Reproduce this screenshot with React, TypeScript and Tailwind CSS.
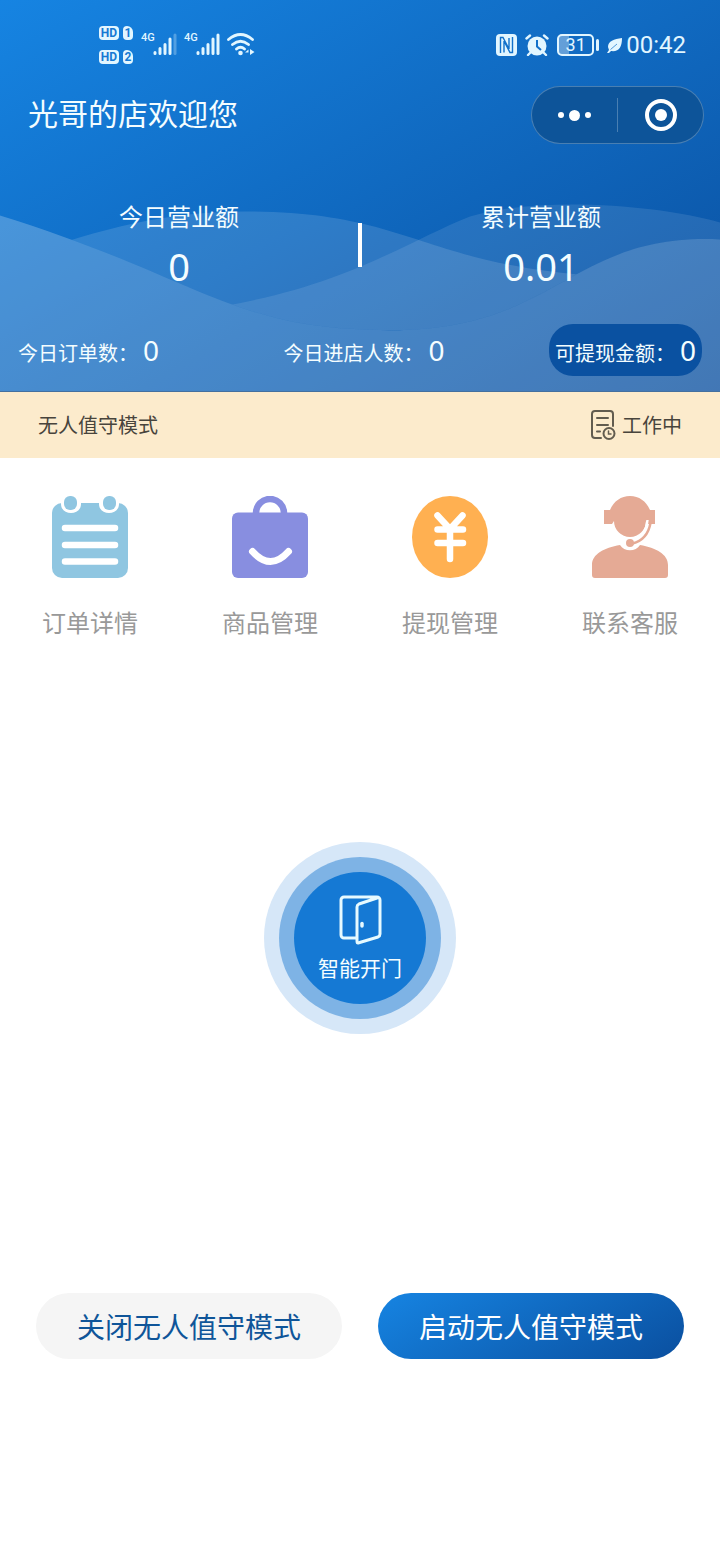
import { useState } from 'react';
import type { ReactNode } from 'react';

const menuItems = [
    { label: '订单详情', icon: <OrdersIcon /> },
    { label: '商品管理', icon: <GoodsIcon /> },
    { label: '提现管理', icon: <YuanIcon /> },
    { label: '联系客服', icon: <ServiceIcon /> },
];

function OrdersIcon() {
    return (
        <svg width="76" height="82" viewBox="0 0 76 82" aria-hidden="true">
            <rect y="7" width="76" height="75" rx="10" fill="#8fc6e1" />
            <path d="M9 0h20v8C29 20 9 20 9 8zM47 0h20v8c0 12-20 12-20 0z" fill="#fff" />
            <g fill="#8fc6e1">
                <rect x="12" y="0" width="13" height="14" rx="6" />
                <rect x="51" y="0" width="13" height="14" rx="6" />
            </g>
            <path d="M13 32h50M13 49h50M13 65.5h50" stroke="#fff" strokeWidth="6.5" strokeLinecap="round" />
        </svg>
    );
}

function GoodsIcon() {
    return (
        <svg width="76" height="82" viewBox="0 0 76 82" fill="none" aria-hidden="true">
            <path d="M24 19v-2a14 14 0 0 1 28 0v2" stroke="#888ee0" strokeWidth="6.5" />
            <rect y="16.5" width="76" height="65.5" rx="6" fill="#888ee0" />
            <path d="M20.5 55.5q18 20 36 0" stroke="#fff" strokeWidth="7" strokeLinecap="round" />
        </svg>
    );
}

function YuanIcon() {
    return (
        <svg width="76" height="82" viewBox="0 0 76 82" fill="none" aria-hidden="true">
            <ellipse cx="38" cy="41" rx="38" ry="41" fill="#ffb051" />
            <path d="M25.5 19.5 38 33l12.5-13.5M25.5 33.5H51M25.5 47H51M38 34v29" stroke="#fff" strokeWidth="6.5" strokeLinecap="round" strokeLinejoin="round" />
        </svg>
    );
}

function ServiceIcon() {
    return (
        <svg width="76" height="82" viewBox="0 0 76 82" fill="none" aria-hidden="true">
            <path d="M18 14C22 5 29 0 38 0s16 5 20 14h5v14h-8l-1-3a16 16 0 0 1-32 0l-2 3h-8V14z" fill="#e5aa95" />
            <path d="M55.5 24c-1 11-6 17-13 20" stroke="#fff" strokeWidth="2.4" />
            <path d="M58.5 27c-2 11-8 18-18 20.5" stroke="#e5aa95" strokeWidth="2.5" />
            <circle cx="38" cy="47" r="4" fill="#e5aa95" />
            <path d="M28 49c4 7 16 7 20 0 16 3 28 9 28 20v10q0 3-3 3H3q-3 0-3-3V69c0-11 12-17 28-20z" fill="#e5aa95" />
        </svg>
    );
}

function Signal({ weak = false }: { weak?: boolean }) {
    return (
        <div className="flex">
            <span className="w-3 font-[Roboto] text-[11px] leading-[10px] font-medium">4G</span>
            <svg width="24" height="23" viewBox="0 0 24 23" aria-hidden="true">
                <g stroke="currentColor" strokeWidth="3" strokeLinecap="round">
                    <path d="M2 20.5v-1M7 20.5v-5M12 20.5v-9M17 20.5V6" />
                    <path d="M22 20.5V2" opacity={weak ? 0.3 : 1} />
                </g>
            </svg>
        </div>
    );
}

function HdBadge({ slot }: { slot: number }) {
    return (
        <div className="flex gap-1 font-[Roboto] text-xs leading-[14px] font-bold text-[#1579d3]">
            <span className="w-5 rounded-sm bg-[#e2f6ff] text-center">HD</span>
            <span className="w-[10px] rounded-sm rounded-tr-md bg-[#e2f6ff] text-center">{slot}</span>
        </div>
    );
}

function StatusBar() {
    return (
        <div className="flex h-[86px] items-center justify-between pt-1 pr-[34px] pl-[99px] text-[#e2f6ff]">
            <div className="flex items-center gap-2">
                <div className="flex flex-col gap-[10px]">
                    <HdBadge slot={1} />
                    <HdBadge slot={2} />
                </div>
                <div className="flex gap-[7px]">
                    <Signal weak />
                    <Signal />
                    <svg width="28" height="24" viewBox="0 0 28 24" fill="none" stroke="currentColor" strokeWidth="2.8" strokeLinecap="round" aria-hidden="true">
                        <path d="M1.5 6.5q12-10 24 0M5.5 11.5q8-6.5 16 0M9.5 16q4-3.5 8 0" />
                        <circle cx="13.5" cy="20" r="2.3" fill="currentColor" stroke="none" />
                        <path d="m21.5 16.5-3.5 3h3.5zM23 16v6l4.5-3z" fill="currentColor" stroke="none" />
                    </svg>
                </div>
            </div>
            <div className="flex items-center gap-2">
                <svg width="21" height="22" viewBox="0 0 21 22" aria-hidden="true">
                    <rect width="21" height="22" rx="4" fill="currentColor" />
                    <path d="M4.5 19V3.5h2.5L13 15V4M16.5 3v15.500H14L8 7v11.500" stroke="#1271ca" strokeWidth="1.4" fill="none" />
                </svg>
                <svg width="24" height="22" viewBox="0 0 24 22" aria-hidden="true">
                    <circle cx="12" cy="12" r="9.5" fill="currentColor" />
                    <path d="M1.5 4.5 5 1.5M22.5 4.5 19 1.5M5.5 18.5 3 21M18.5 18.5 21 21" stroke="currentColor" strokeWidth="2.4" strokeLinecap="round" />
                    <path d="M12 6v6.5l4 3.5" stroke="#1271ca" strokeWidth="2" fill="none" />
                </svg>
                <div className="flex items-center gap-[2px]">
                    <span className="h-[22px] w-[37px] rounded-[5px] border-2 border-current bg-linear-to-r from-white/35 from-30% to-transparent to-30% text-center font-[Roboto] text-lg leading-[18px]">31</span>
                    <span className="h-3 w-[3px] rounded-sm bg-current" />
                </div>
                <svg width="15" height="15" viewBox="0 0 15 15" aria-hidden="true">
                    <path d="M15 0C7 1 1 3 1 9l1 3-2 3h2l2-2c8 1 11-4 11-13z" fill="currentColor" />
                    <path d="M3.5 11.5 10 6" stroke="#1271ca" strokeWidth="0.7" />
                </svg>
                <time className="-ml-1 font-[Roboto] text-2xl leading-6">00:42</time>
            </div>
        </div>
    );
}

function Waves() {
    return (
        <svg className="absolute inset-0 h-full w-full" viewBox="0 0 720 392" preserveAspectRatio="none" fill="#fff" aria-hidden="true">
            <clipPath id="above-front">
                <path d="M0 0H720V240C570 233 560 331 390 331 230 331 205 280 0 216z" />
            </clipPath>
            <g clipPath="url(#above-front)">
                <path d="M0 265C90 232 160 212 245 212 410 212 420 265 600 277V392H0z" fillOpacity="0.13" />
                <path d="M190 312C340 292 400 245 470 217 540 196 660 206 720 223V392H190z" fillOpacity="0.1" />
            </g>
            <path d="M0 216C205 280 230 331 390 331 560 331 570 233 720 240V392H0z" fillOpacity="0.23" />
        </svg>
    );
}

function Total({ label, value }: { label: string; value: string }) {
    return (
        <div className="flex flex-1 flex-col items-center gap-[10px]">
            <span className="text-2xl leading-8">{label}</span>
            <span className="font-['Noto_Sans',sans-serif] text-[38px] leading-[48px]">{value}</span>
        </div>
    );
}

function Count({ label, value }: { label: string; value: number }) {
    return (
        <div className="flex items-baseline gap-[5px]">
            <span className="text-xl">{label}：</span>
            <span className="font-['Noto_Sans',sans-serif] text-[28px] leading-9">{value}</span>
        </div>
    );
}

function ModeButton({ primary = false, onClick, children }: { primary?: boolean; onClick: () => void; children: ReactNode }) {
    const colors = primary
        ? 'bg-linear-[150deg,#1684e2,#0a4f9f] text-white'
        : 'bg-[#f5f5f5] text-[#0f5599]';
    return (
        <button type="button" onClick={onClick} className={`h-[66px] flex-1 rounded-full text-[28px] ${colors}`}>
            {children}
        </button>
    );
}

export default function App() {
    const [working, setWorking] = useState(true);

    return (
        <div className="min-h-screen bg-white font-['Noto_Sans_CJK_SC',sans-serif]">
            <header className="relative border-b border-[#44709f] bg-linear-[150deg,#1684e2,#0a4f9f] pb-[15px] text-[#f4fdff]">
                <Waves />
                <div className="relative">
                    <StatusBar />
                    <div className="flex items-start justify-between pr-4 pl-7">
                        <h1 className="text-3xl leading-[52px]">光哥的店欢迎您</h1>
                        <div className="flex h-[58px] w-[173px] items-center rounded-full border border-white/25 bg-[#0d5499]">
                            <button type="button" aria-label="更多" className="flex flex-1 items-center justify-center gap-[5px]">
                                <span className="size-[6px] rounded-full bg-white" />
                                <span className="size-[11px] rounded-full bg-white" />
                                <span className="size-[6px] rounded-full bg-white" />
                            </button>
                            <span className="h-[34px] w-px bg-white/25" />
                            <button type="button" aria-label="关闭" className="flex flex-1 items-center justify-center">
                                <span className="flex size-8 items-center justify-center rounded-full border-4 border-white">
                                    <span className="size-3 rounded-full bg-white" />
                                </span>
                            </button>
                        </div>
                    </div>

                    {/* Turnover */}
                    <div className="mt-14 flex items-center">
                        <Total label="今日营业额" value="0" />
                        <span className="h-11 w-1 bg-white" />
                        <Total label="累计营业额" value="0.01" />
                    </div>

                    {/* Today */}
                    <div className="mt-[34px] grid grid-cols-3 items-center px-[18px]">
                        <Count label="今日订单数" value={0} />
                        <div className="flex justify-center pl-2">
                            <Count label="今日进店人数" value={0} />
                        </div>
                        <div className="flex h-[52px] items-center justify-self-end rounded-3xl bg-[#0a51a1] px-[6px]">
                            <Count label="可提现金额" value={0} />
                        </div>
                    </div>
                </div>
            </header>

            <div className="flex h-[66px] items-center justify-between bg-[#fcebcc] px-[38px] text-xl text-[#48443c]">
                <span>无人值守模式</span>
                <span className="flex items-center gap-[6px]">
                    <svg width="25" height="30" viewBox="0 0 25 30" fill="none" stroke="#625c4f" strokeWidth="2" strokeLinecap="round" aria-hidden="true">
                        <path d="M10 28H4a3 3 0 0 1-3-3V4a3 3 0 0 1 3-3h15a3 3 0 0 1 3 3v12M6 8h11M6 15h11M6 21.5h3" />
                        <circle cx="18" cy="23.5" r="5.5" />
                        <path d="M17.5 21v3H20" strokeWidth="1.5" />
                    </svg>
                    {working ? '工作中' : '休息中'}
                </span>
            </div>

            <nav className="grid grid-cols-4 pt-[38px]">
                {menuItems.map(item => (
                    <a key={item.label} href="#" className="flex flex-col items-center gap-7 text-2xl leading-8 text-[#999]">
                        {item.icon}
                        {item.label}
                    </a>
                ))}
            </nav>

            <main className="flex flex-col items-center pb-12">
                <button type="button" className="mt-[204px] rounded-full bg-[#d6e7f8] p-[15px]">
                    <span className="block rounded-full bg-[#7eb3e5] p-[15px]">
                        <span className="flex size-[132px] flex-col items-center justify-center gap-2 rounded-full bg-[#1579d4] text-[#f4fdff]">
                            <svg width="43" height="50" viewBox="0 0 43 50" fill="none" stroke="#e6faff" strokeWidth="3" strokeLinejoin="round" strokeLinecap="round" aria-hidden="true">
                                <path d="M17 43H5a3 3 0 0 1-3-3V5a3 3 0 0 1 3-3h33a3 3 0 0 1 3 3v34q0 2-2 3l-20 6q-1 0-1-2V12q0-2 2-3L38 3" />
                                <path d="M23 28.5V31" strokeWidth="3.5" />
                            </svg>
                            <span className="text-[21px] leading-7">智能开门</span>
                        </span>
                    </span>
                </button>

                <div className="mt-[259px] flex w-full gap-9 px-9">
                    <ModeButton onClick={() => setWorking(false)}>关闭无人值守模式</ModeButton>
                    <ModeButton primary onClick={() => setWorking(true)}>启动无人值守模式</ModeButton>
                </div>
            </main>
        </div>
    );
}
